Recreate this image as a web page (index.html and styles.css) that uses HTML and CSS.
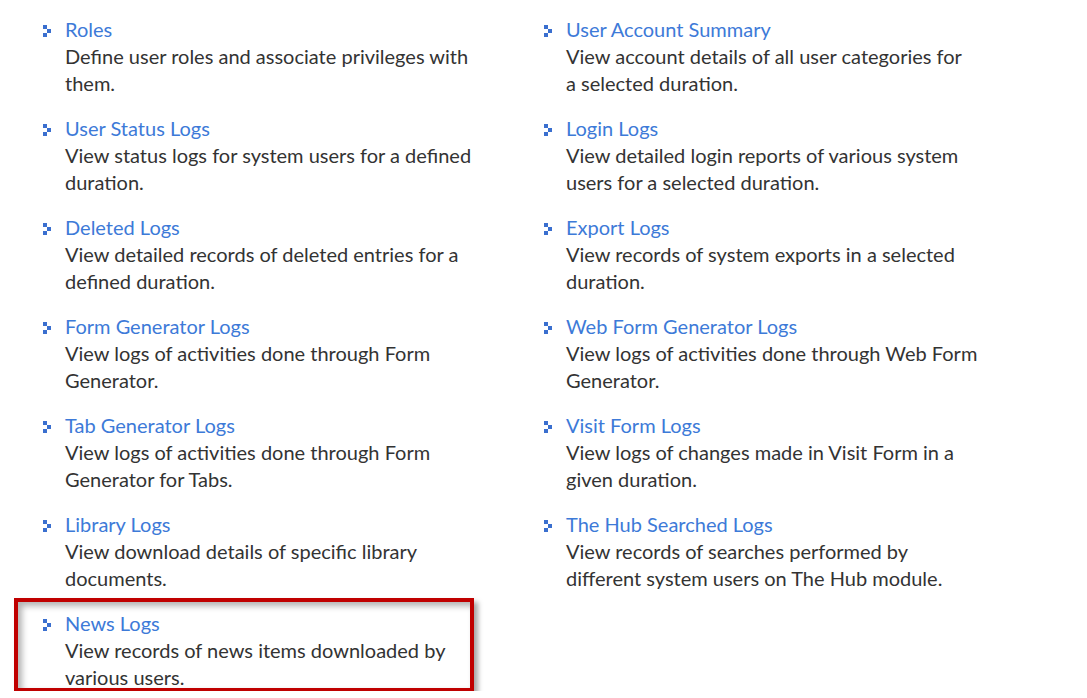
FILE: index.html
```html
<!DOCTYPE html>
<html lang="en">
<head>
  <meta charset="UTF-8">
  <title>Administration Logs</title>
  <link rel="stylesheet" href="styles.css">
</head>
<body>
  <div class="menu">
    <div class="item">
      <a class="title" href="#">Roles</a>
      <p>Define user roles and associate privileges with<br>them.</p>
    </div>
    <div class="item">
      <a class="title" href="#">User Account Summary</a>
      <p>View account details of all user categories for<br>a selected duration.</p>
    </div>
    <div class="item">
      <a class="title" href="#">User Status Logs</a>
      <p>View status logs for system users for a defined<br>duration.</p>
    </div>
    <div class="item">
      <a class="title" href="#">Login Logs</a>
      <p>View detailed login reports of various system<br>users for a selected duration.</p>
    </div>
    <div class="item">
      <a class="title" href="#">Deleted Logs</a>
      <p>View detailed records of deleted entries for a<br>defined duration.</p>
    </div>
    <div class="item">
      <a class="title" href="#">Export Logs</a>
      <p>View records of system exports in a selected<br>duration.</p>
    </div>
    <div class="item">
      <a class="title" href="#">Form Generator Logs</a>
      <p>View logs of activities done through Form<br>Generator.</p>
    </div>
    <div class="item">
      <a class="title" href="#">Web Form Generator Logs</a>
      <p>View logs of activities done through Web Form<br>Generator.</p>
    </div>
    <div class="item">
      <a class="title" href="#">Tab Generator Logs</a>
      <p>View logs of activities done through Form<br>Generator for Tabs.</p>
    </div>
    <div class="item">
      <a class="title" href="#">Visit Form Logs</a>
      <p>View logs of changes made in Visit Form in a<br>given duration.</p>
    </div>
    <div class="item">
      <a class="title" href="#">Library Logs</a>
      <p>View download details of specific library<br>documents.</p>
    </div>
    <div class="item">
      <a class="title" href="#">The Hub Searched Logs</a>
      <p>View records of searches performed by<br>different system users on The Hub module.</p>
    </div>
    <div class="item marked">
      <a class="title" href="#">News Logs</a>
      <p>View records of news items downloaded by<br>various users.</p>
    </div>
  </div>
</body>
</html>
```

FILE: styles.css
```css
body { margin: 0; background: #fff; font-family: Lato, "Liberation Sans", sans-serif; font-size: 20px; line-height: 27px; color: #333; }
.menu { display: grid; grid-template-columns: 501px 501px; row-gap: 18px; padding: 16px 0 0 42px; }
.item { position: relative; padding-left: 23px; width: 405px; }
.item::before {
  content: ""; position: absolute; left: 1px; top: 9px; width: 8px; height: 12px;
  background:
    linear-gradient(#3a6fcf, #3a6fcf) 0 0 / 4px 4px no-repeat,
    linear-gradient(#3a6fcf, #3a6fcf) 4px 4px / 4px 4px no-repeat,
    linear-gradient(#3a6fcf, #3a6fcf) 0 8px / 4px 4px no-repeat;
}
.title { display: block; color: #3d7ad8; text-decoration: none; }
.item p { margin: 0; white-space: nowrap; }
.marked::after {
  content: ""; position: absolute; left: -28px; top: -12px; right: -4px; bottom: -1px;
  border: 4px solid #c00000;
  box-shadow: inset 4px 4px 6px rgba(0,0,0,.3), 4px 4px 5px rgba(0,0,0,.35);
}
```
